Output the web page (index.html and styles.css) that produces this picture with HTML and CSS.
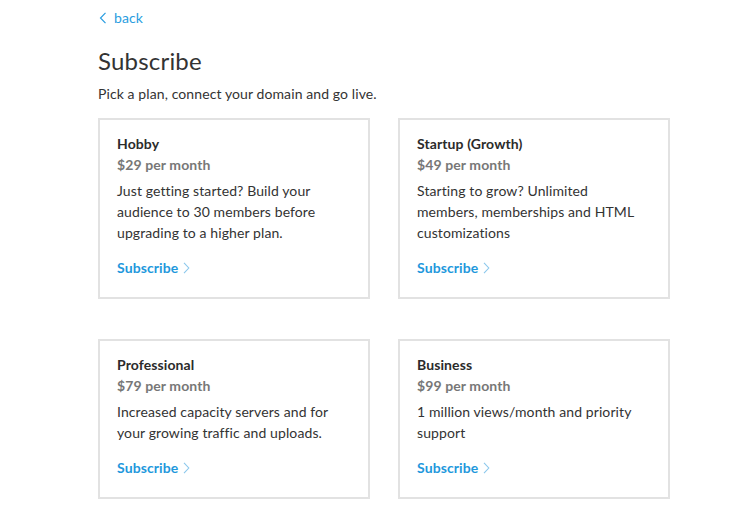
FILE: index.html
```html
<!DOCTYPE html>
<html lang="en">
<head>
<meta charset="utf-8">
<title>Subscribe</title>
<link rel="stylesheet" href="styles.css">
</head>
<body>
<main class="page">
  <a class="back" href="#">
    <svg class="back-icon" width="8" height="12" viewBox="0 0 8 12" aria-hidden="true"><path d="M6.5 0.8 L1.5 6 L6.5 11.2" fill="none" stroke="currentColor" stroke-width="1.2"/></svg>
    <span>back</span>
  </a>
  <h1 class="title">Subscribe</h1>
  <p class="lead">Pick a plan, connect your domain and go live.</p>
  <section class="plans">
    <article class="plan">
      <h2 class="plan-name">Hobby</h2>
      <div class="plan-price">$29 per month</div>
      <p class="plan-desc">Just getting started? Build your audience to 30 members before upgrading to a higher plan.</p>
      <a class="plan-link" href="#">Subscribe <svg class="chev" width="7" height="12" viewBox="0 0 7 12" aria-hidden="true"><path d="M1 0.8 L5.8 6 L1 11.2" fill="none" stroke="currentColor" stroke-width="1.1"/></svg></a>
    </article>
    <article class="plan">
      <h2 class="plan-name">Startup (Growth)</h2>
      <div class="plan-price">$49 per month</div>
      <p class="plan-desc">Starting to grow? Unlimited members, memberships and HTML customizations</p>
      <a class="plan-link" href="#">Subscribe <svg class="chev" width="7" height="12" viewBox="0 0 7 12" aria-hidden="true"><path d="M1 0.8 L5.8 6 L1 11.2" fill="none" stroke="currentColor" stroke-width="1.1"/></svg></a>
    </article>
    <article class="plan">
      <h2 class="plan-name">Professional</h2>
      <div class="plan-price">$79 per month</div>
      <p class="plan-desc">Increased capacity servers and for your growing traffic and uploads.</p>
      <a class="plan-link" href="#">Subscribe <svg class="chev" width="7" height="12" viewBox="0 0 7 12" aria-hidden="true"><path d="M1 0.8 L5.8 6 L1 11.2" fill="none" stroke="currentColor" stroke-width="1.1"/></svg></a>
    </article>
    <article class="plan">
      <h2 class="plan-name">Business</h2>
      <div class="plan-price">$99 per month</div>
      <p class="plan-desc">1 million views/month and priority support</p>
      <a class="plan-link" href="#">Subscribe <svg class="chev" width="7" height="12" viewBox="0 0 7 12" aria-hidden="true"><path d="M1 0.8 L5.8 6 L1 11.2" fill="none" stroke="currentColor" stroke-width="1.1"/></svg></a>
    </article>
  </section>
</main>
</body>
</html>
```
FILE: styles.css
```css
* { box-sizing: border-box; }
html, body { margin: 0; padding: 0; background: #fff; }
body {
  font-family: "Lato", "Noto Sans", sans-serif;
  color: #333;
  font-size: 14px;
  line-height: 21px;
  letter-spacing: 0.1px;
}
.page {
  width: 572px;
  margin-left: 98px;
  padding-top: 8px;
}
.back {
  display: inline-flex;
  align-items: center;
  gap: 7px;
  color: #2a9de0;
  text-decoration: none;
  font-size: 14px;
  line-height: 20px;
}
.back-icon { margin-left: 1px; }
.title {
  margin: 17px 0 0;
  font-size: 24px;
  font-weight: 400;
  line-height: 30px;
  color: #333;
  letter-spacing: 0.2px;
}
.lead {
  margin: 8px 0 0;
  line-height: 20px;
}
.plans {
  margin-top: 14px;
  display: grid;
  grid-template-columns: 272px 272px;
  column-gap: 28px;
  row-gap: 40px;
}
.plan {
  border: 2px solid #e2e2e2;
  padding: 13px 24px 19px 17px;
}
.plan-name {
  margin: 0;
  font-size: 14px;
  font-weight: 700;
  line-height: 21px;
  color: #2b2b2b;
}
.plan-price {
  font-weight: 700;
  color: #777;
  line-height: 21px;
}
.plan-desc {
  margin: 5px 0 0;
  line-height: 21px;
  color: #333;
}
.plan-link {
  display: inline-flex;
  align-items: center;
  gap: 5px;
  margin-top: 14px;
  color: #1f98dc;
  font-weight: 700;
  text-decoration: none;
  line-height: 21px;
}
.chev { color: #8cc8ec; }
```
